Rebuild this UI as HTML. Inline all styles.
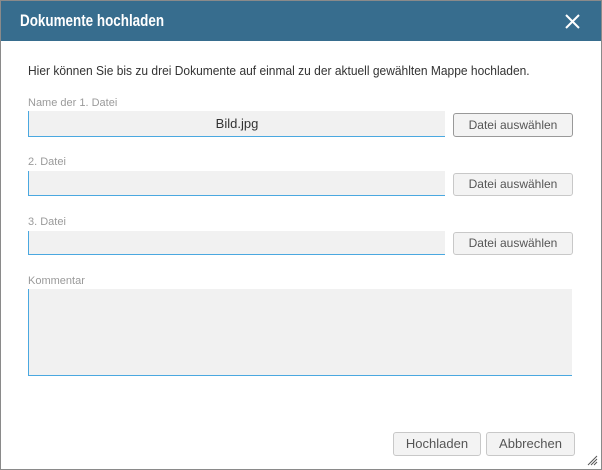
<!DOCTYPE html>
<html><head><style>
*{box-sizing:border-box;margin:0;padding:0}
body{width:602px;height:470px;background:#fff;font-family:"Liberation Sans",sans-serif;position:relative;overflow:hidden}
.frame{position:absolute;left:0;top:0;width:602px;height:470px;border:1px solid #8a8a8a}
.hdr{position:absolute;left:1px;top:1px;width:600px;height:40px;background:#376d8e;color:#fff;font-size:17px;font-weight:bold;line-height:40px;padding-left:19px}
.hdr span{display:inline-block;transform:scaleX(0.79);transform-origin:left center}
.x{position:absolute;right:20px;top:12px;width:17px;height:17px}
.intro{position:absolute;left:28px;top:64px;font-size:12.5px;color:#333;transform:scaleX(0.96);transform-origin:left top;white-space:nowrap}
.lbl{position:absolute;left:28px;font-size:11px;color:#9a9a9a}
.inp{position:absolute;left:28px;width:417px;background:#f1f1f1;border-left:1px solid #4aa8e0;border-bottom:1px solid #4aa8e0;font-size:13px;color:#333;text-align:center}
.btn{position:absolute;background:#f3f3f3;border:1px solid #c8c8c8;border-radius:3px;font-size:12px;color:#555;text-align:center}
</style></head><body>
<div class="frame"></div>
<div class="hdr"><span>Dokumente hochladen</span>
<svg class="x" viewBox="0 0 17 17"><path d="M2 2L15 15M15 2L2 15" stroke="#fff" stroke-width="2"/></svg></div>
<div class="intro">Hier können Sie bis zu drei Dokumente auf einmal zu der aktuell gewählten Mappe hochladen.</div>
<div class="lbl" style="top:97px">Name der 1. Datei</div>
<div class="inp" style="top:111px;height:26px;line-height:25px">Bild.jpg</div>
<div class="btn" style="left:453px;top:113px;width:120px;height:24px;line-height:22px;border-color:#999">Datei auswählen</div>
<div class="lbl" style="top:156px">2. Datei</div>
<div class="inp" style="top:171px;height:25px"></div>
<div class="btn" style="left:453px;top:173px;width:120px;height:23px;line-height:21px">Datei auswählen</div>
<div class="lbl" style="top:216px">3. Datei</div>
<div class="inp" style="top:231px;height:24px"></div>
<div class="btn" style="left:453px;top:232px;width:120px;height:23px;line-height:21px">Datei auswählen</div>
<div class="lbl" style="top:275px">Kommentar</div>
<div class="inp" style="top:289px;height:87px;width:544px"></div>
<div class="btn" style="left:393px;top:432px;width:88px;height:24px;line-height:22px;font-size:13px">Hochladen</div>
<div class="btn" style="left:486px;top:432px;width:89px;height:24px;line-height:22px;font-size:13px">Abbrechen</div>
<svg style="position:absolute;left:586px;top:454px" width="12" height="12"><path d="M11 2L2 11M11 5L5 11M11 8L8 11" stroke="#555" stroke-width="1"/></svg>
</body></html>
